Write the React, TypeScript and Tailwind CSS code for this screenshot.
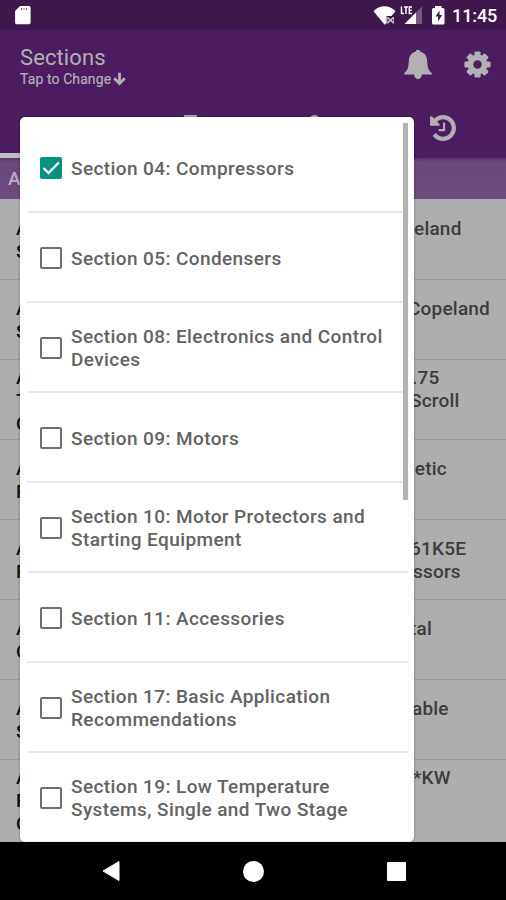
import React from "react";

type Line = [string, string?];

const sections: { lines: string[]; checked?: boolean }[] = [
  { lines: ["Section 04: Compressors"], checked: true },
  { lines: ["Section 05: Condensers"] },
  { lines: ["Section 08: Electronics and Control", "Devices"] },
  { lines: ["Section 09: Motors"] },
  { lines: ["Section 10: Motor Protectors and", "Starting Equipment"] },
  { lines: ["Section 11: Accessories"] },
  { lines: ["Section 17: Basic Application", "Recommendations"] },
  { lines: ["Section 19: Low Temperature", "Systems, Single and Two Stage"] },
];

const articles: Line[][] = [
  [["A", "eland"], ["S"]],
  [["A", "Copeland"], ["S"]],
  [["A", ".75"], ["T", "Scroll"], ["C"]],
  [["A", "netic"], ["R"]],
  [["A", "61K5E"], ["R", "ssors"]],
  [["A", "tal"], ["C"]],
  [["A", "able"], ["S"]],
  [["A", "*KW"], ["R"], ["C"]],
];

const fragmentInset: Record<string, string> = {
  eland: "w-[398px]",
  Copeland: "w-[392px]",
  ".75": "w-[396px]",
  Scroll: "w-[394px]",
  netic: "w-[388px]",
  "61K5E": "w-[394px]",
  ssors: "w-[397px]",
  tal: "w-[394px]",
  able: "w-[396px]",
  "*KW": "w-[397px]",
};

function StatusBar() {
  return (
    <div className="flex h-[30px] items-center bg-[#3e184b] text-white">
      <svg className="ml-[14px] h-[20px] w-[18px]" viewBox="0 0 18 20">
        <path d="M6 1h9a1.6 1.6 0 0 1 1.6 1.6v15A1.6 1.6 0 0 1 15 19.300H2.700a1.600 1.600 0 0 1-1.600-1.600V6z" fill="#fff" />
        <path d="M7.500 3v2M10 3v2M12.500 3v2" stroke="#776080" strokeWidth="1" />
      </svg>
      <svg className="ml-[341px] h-[22px] w-[74px]" viewBox="373 4 74 22">
        <path d="M373.500 11.200c6.200-6.600 15.800-6.600 22 0l-4 4.700h-5v7l-1.800 1.800z" fill="#fff" />
        <path d="M387.500 17.500l6 5.500m0-5.500l-6 5.500" stroke="#d5cad9" strokeWidth="1.500" />
        <path d="M387 17v6.500M393.500 17v6.500" stroke="#d5cad9" strokeWidth="0.800" />
        <path d="M422 6.500v17.500h-17.500z" fill="#755a7e" />
        <path d="M404.500 24l11.500-11.500V24z" fill="#fff" />
        <path d="M401.500 6.500v7h2.500M404 7h4M406 7v7M412 7h-2.700v6.500h2.700M409.500 10.200h2.200" fill="none" stroke="#fff" strokeWidth="1.500" />
        <path d="M435 6h6.500v2h1.500a1.500 1.500 0 0 1 1.500 1.500v13.500a1.500 1.500 0 0 1-1.500 1.500h-9.500a1.500 1.500 0 0 1-1.500-1.500V9.500A1.500 1.500 0 0 1 433.500 8H435z" fill="#fff" />
        <path d="M439.500 10.500l-4 6h2.600v5l4-6.500h-2.600z" fill="#3e184b" />
      </svg>
      <span className="ml-[5px] mt-[2px] text-[18px] font-medium leading-[20px] tracking-[-0.1px]">11:45</span>
    </div>
  );
}

function Header() {
  return (
    <header className="h-[128px] bg-[#4b1c5f] text-[#b2b0b3]">
      <div className="flex h-[80px] pl-[20px] pt-[14px]">
        <div className="w-[384px]">
          <div className="text-[22px] leading-[27px] tracking-[0.100px]">Sections</div>
          <div className="flex items-center text-[14px] leading-[16px] tracking-[0.100px] [-webkit-text-stroke:0.2px]">
            Tap to Change
            <svg className="ml-[2px] h-[14px] w-[13px]" viewBox="0 0 13 14" fill="none" stroke="currentColor" strokeWidth="2.800">
              <path d="M6.500 .800v10.700M1.200 6.200l5.300 5.300 5.300-5.300" />
            </svg>
          </div>
        </div>
        <svg className="mt-[5px] h-[32px] w-[28px]" viewBox="0 0 28 32" fill="currentColor">
          <path d="M14 .800c1.500 0 2.200.900 2.400 2 4.600 1.200 6.600 4.700 6.800 9.200.300 7.500 1.700 9.500 4.700 12.200v1.400H18c-.500 2.900-1.600 4.500-4 4.500s-3.500-1.600-4-4.500H.100v-1.400c3-2.700 4.400-4.700 4.700-12.200.200-4.500 2.200-8 6.800-9.200.200-1.100.900-2 2.400-2z" />
        </svg>
        <svg className="ml-[32px] mt-[7px] size-[27px]" viewBox="0 0 27 27">
          <g fill="currentColor">
            {[0, 45, 90, 135].map((angle) => (
              <path key={angle} d="M11.400 .400h4.200l1 .800v24.600l-1 .800h-4.200l-1-.800V1.200z" transform={`rotate(${angle} 13.5 13.5)`} />
            ))}
            <circle cx="13.500" cy="13.500" r="10" />
          </g>
          <circle cx="13.500" cy="13.500" r="4.200" fill="#4b1c5f" />
        </svg>
      </div>
      <div className="flex h-[48px] items-start pt-[4px]">
        <div className="mt-[39px] h-[5px] w-[126px] bg-[#c2bdc5]" />
        <div className="ml-[58px] mt-px h-[12px] w-[13px] rounded-[1px] bg-[#b2b0b3]" />
        <div className="ml-[111px] mt-px h-[13px] w-[13px] rounded-full bg-[#b2b0b3]" />
        <svg className="ml-[109px] mt-px size-[26px]" viewBox="0 128 1536 1536" fill="currentColor">
          <path d="M1536 896q0 156-61 298t-164 245-245 164-298 61q-172 0-327-72.500T177 1387q-7-10-6.500-22.500t8.500-20.500l137-138q10-9 25-9 16 2 23 12 73 95 179 147t225 52q104 0 198.500-40.500T1130 1258t109.500-163.500T1280 896t-40.500-198.500T1130 534 966.500 424.500 768 384q-98 0-188 35.500T420 521l137 138q31 30 14 69-17 40-59 40H64q-26 0-45-19T0 704V256q0-42 40-59 39-17 69 14l130 129q107-101 244.500-156.500T768 128q156 0 298 61t245 164 164 245 61 298zM896 608v448q0 14-9 23t-23 9H544q-14 0-23-9t-9-23v-64q0-14 9-23t23-9h224V608q0-14 9-23t23-9h64q14 0 23 9t9 23z" />
        </svg>
      </div>
    </header>
  );
}

function ArticleList() {
  return (
    <main className="h-[684px] overflow-hidden bg-[#aeaeae] text-[#3c3c3c]">
      <div className="mb-px flex h-[41px] items-center bg-gradient-to-b from-[#583367] via-[#6a4879] via-10% to-[#6c4a7d] pl-[8px] pt-[2px] text-[19px] font-medium text-[#b9aebf]">A</div>
      {articles.map((lines, i) => (
        <div key={i} className="flex h-[80px] flex-col justify-center border-b border-[#989898] pt-px text-[19px] font-medium leading-[23px] tracking-[0.2px] last:border-transparent">
          {lines.map(([start, end], j) => (
            <div key={j} className="flex pl-[16px]">
              <span className={`shrink-0 text-[#101010] ${end ? fragmentInset[end] : "w-[390px]"}`}>{start}</span>
              {end && <span>{end}</span>}
            </div>
          ))}
        </div>
      ))}
    </main>
  );
}

function Checkbox({ checked }: { checked?: boolean }) {
  return checked ? (
    <span className="mt-[2px] flex size-[22px] shrink-0 items-center justify-center rounded-[2px] bg-[#06927f]">
      <svg className="size-[22px]" viewBox="0 0 22 22" fill="none" stroke="#fff" strokeWidth="2.300">
        <path d="M3.500 11l5 5L18.800 5.500" />
      </svg>
    </span>
  ) : (
    <span className="mt-[2px] size-[22px] shrink-0 rounded-[2px] border-2 border-[#6f6f6f]" />
  );
}

function SectionDialog() {
  return (
    <div role="dialog" className="absolute left-[20px] top-[117px] h-[725px] w-[394px] overflow-hidden rounded-[5px] bg-white pl-[7px] pt-[6px] shadow-[0_0_3px_rgba(0,0,0,0.35)]">
      {sections.map(({ lines, checked }) => (
        <label key={lines[0]} className="flex h-[90px] w-[381px] items-center border-b-2 border-[#e9e9e9] pl-[13px] last:border-transparent">
          <Checkbox checked={checked} />
          <span className="ml-[9px] mt-[2px] text-[19px] font-medium leading-[23px] tracking-[0.400px] text-[#636363]">
            {lines.map((line) => (
              <span key={line} className="block whitespace-nowrap">{line}</span>
            ))}
          </span>
        </label>
      ))}
      <div className="absolute right-[6px] top-[6px] h-[377px] w-[5px] bg-[#b3b3b3]" />
    </div>
  );
}

export default function App() {
  return (
    <div className="relative h-[900px] w-[506px] overflow-hidden bg-black font-['Roboto',sans-serif]">
      <StatusBar />
      <Header />
      <ArticleList />
      <SectionDialog />
      <nav className="flex h-[58px] items-center bg-black">
        <svg className="ml-[102px] size-[22px]" viewBox="0 0 22 22">
          <path d="M17 1.500v19L1 11z" fill="#fff" stroke="#fff" strokeLinejoin="round" />
        </svg>
        <span className="ml-[119px] size-[21px] rounded-full bg-white" />
        <span className="ml-[123px] size-[19px] rounded-[1px] bg-white" />
      </nav>
    </div>
  );
}
